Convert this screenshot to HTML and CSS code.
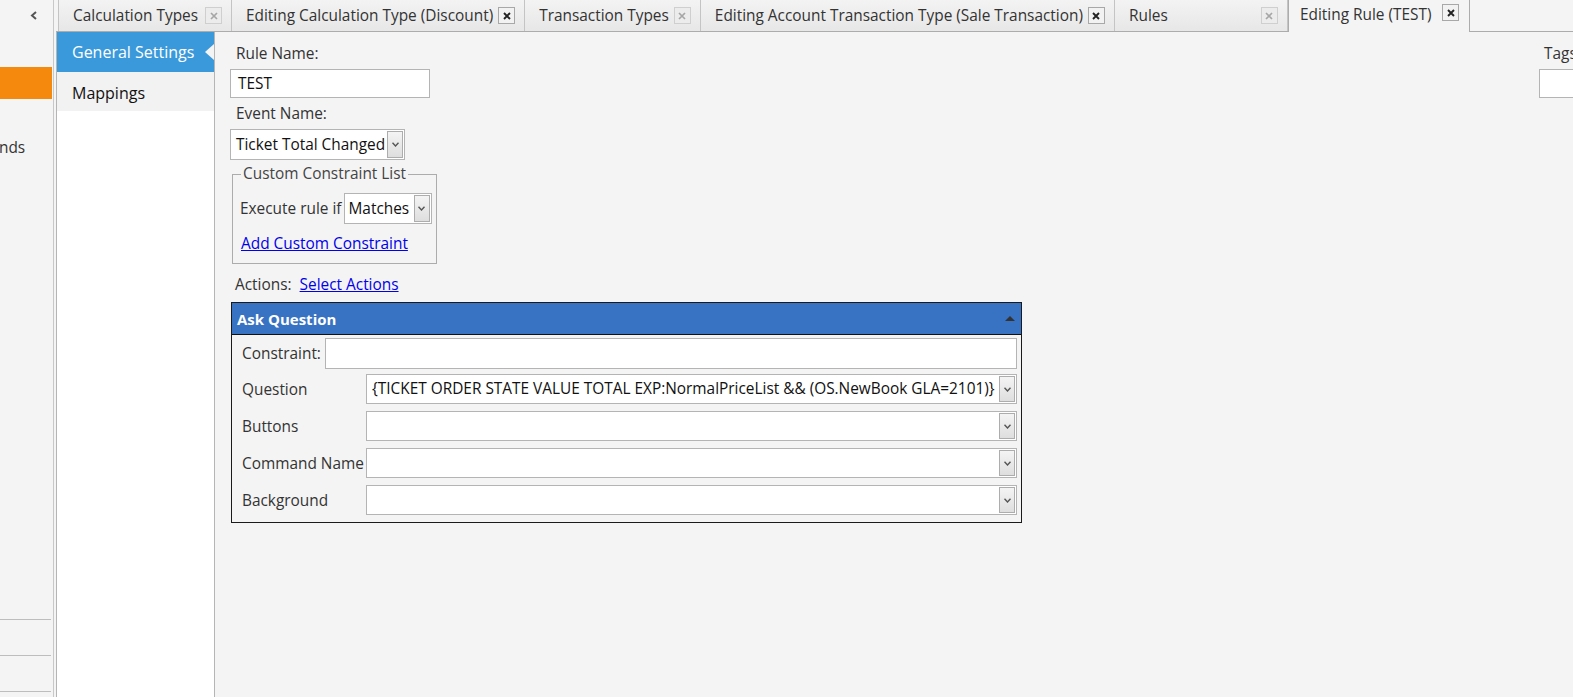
FILE: index.html
```html
<!DOCTYPE html>
<html lang="en">
<head>
    <meta charset="UTF-8">
    <title>Editing Rule (TEST)</title>
    <link rel="stylesheet" href="styles.css">
</head>
<body>
    <div class="app">
        <aside class="sidebar">
            <div class="collapse">
                <svg width="8" height="9" viewBox="0 0 8 9"><path d="M6 1 L2 4.5 L6 8" fill="none" stroke="#555" stroke-width="2"/></svg>
            </div>
            <div class="side-active"></div>
            <div class="side-item"><span>Commands</span></div>
            <div class="side-bottom">
                <div class="side-line"></div>
                <div class="side-line"></div>
                <div class="side-line"></div>
            </div>
        </aside>

        <main class="main">
            <div class="tabbar">
                <div class="tab">
                    <span>Calculation Types</span>
                    <span class="close faded"><svg width="8" height="8" viewBox="0 0 8 8"><path d="M1 1 L7 7 M7 1 L1 7" stroke="currentColor" stroke-width="1.7"/></svg></span>
                </div>
                <div class="tab">
                    <span>Editing Calculation Type (Discount)</span>
                    <span class="close"><svg width="8" height="8" viewBox="0 0 8 8"><path d="M1 1 L7 7 M7 1 L1 7" stroke="currentColor" stroke-width="1.9"/></svg></span>
                </div>
                <div class="tab">
                    <span>Transaction Types</span>
                    <span class="close faded"><svg width="8" height="8" viewBox="0 0 8 8"><path d="M1 1 L7 7 M7 1 L1 7" stroke="currentColor" stroke-width="1.7"/></svg></span>
                </div>
                <div class="tab">
                    <span>Editing Account Transaction Type (Sale Transaction)</span>
                    <span class="close"><svg width="8" height="8" viewBox="0 0 8 8"><path d="M1 1 L7 7 M7 1 L1 7" stroke="currentColor" stroke-width="1.9"/></svg></span>
                </div>
                <div class="tab">
                    <span>Rules</span>
                    <span class="close faded"><svg width="8" height="8" viewBox="0 0 8 8"><path d="M1 1 L7 7 M7 1 L1 7" stroke="currentColor" stroke-width="1.7"/></svg></span>
                </div>
                <div class="tab active">
                    <span>Editing Rule (TEST)</span>
                    <span class="close"><svg width="8" height="8" viewBox="0 0 8 8"><path d="M1 1 L7 7 M7 1 L1 7" stroke="currentColor" stroke-width="1.9"/></svg></span>
                </div>
            </div>

            <div class="workspace">
                <nav class="subnav">
                    <div class="subnav-item selected">General Settings</div>
                    <div class="subnav-item">Mappings</div>
                </nav>

                <section class="content">
                    <div class="form-col">
                        <label class="field-label">Rule Name:</label>
                        <div class="textbox name-box">TEST</div>

                        <label class="field-label event-label">Event Name:</label>
                        <div class="combo event-combo">
                            <span class="combo-text">Ticket Total Changed</span>
                            <span class="drop"><svg width="7" height="5" viewBox="0 0 7 5"><path d="M0.5 0.8 L3.5 4 L6.5 0.8" fill="none" stroke="#555" stroke-width="1.4"/></svg></span>
                        </div>

                        <fieldset class="constraints">
                            <legend>Custom Constraint List</legend>
                            <div class="exec-row">
                                <span>Execute rule if</span>
                                <div class="combo match-combo">
                                    <span class="combo-text">Matches</span>
                                    <span class="drop"><svg width="7" height="5" viewBox="0 0 7 5"><path d="M0.5 0.8 L3.5 4 L6.5 0.8" fill="none" stroke="#555" stroke-width="1.4"/></svg></span>
                                </div>
                            </div>
                            <a href="#" class="link add-link">Add Custom Constraint</a>
                        </fieldset>

                        <div class="actions-row">
                            <span>Actions:</span>
                            <a href="#" class="link">Select Actions</a>
                        </div>

                        <div class="action-panel">
                            <div class="panel-head">
                                <span>Ask Question</span>
                                <span class="collapse-arrow"></span>
                            </div>
                            <div class="panel-body">
                                <div class="prow constraint-row">
                                    <span class="plabel-auto">Constraint:</span>
                                    <div class="textbox wide"></div>
                                </div>
                                <div class="prow">
                                    <span class="plabel">Question</span>
                                    <div class="combo wide">
                                        <span class="combo-text">{TICKET ORDER STATE VALUE TOTAL EXP:NormalPriceList &amp;&amp; (OS.NewBook GLA=2101)}</span>
                                        <span class="drop"><svg width="7" height="5" viewBox="0 0 7 5"><path d="M0.5 0.8 L3.5 4 L6.5 0.8" fill="none" stroke="#555" stroke-width="1.4"/></svg></span>
                                    </div>
                                </div>
                                <div class="prow">
                                    <span class="plabel">Buttons</span>
                                    <div class="combo wide">
                                        <span class="combo-text"></span>
                                        <span class="drop"><svg width="7" height="5" viewBox="0 0 7 5"><path d="M0.5 0.8 L3.5 4 L6.5 0.8" fill="none" stroke="#555" stroke-width="1.4"/></svg></span>
                                    </div>
                                </div>
                                <div class="prow">
                                    <span class="plabel">Command Name</span>
                                    <div class="combo wide">
                                        <span class="combo-text"></span>
                                        <span class="drop"><svg width="7" height="5" viewBox="0 0 7 5"><path d="M0.5 0.8 L3.5 4 L6.5 0.8" fill="none" stroke="#555" stroke-width="1.4"/></svg></span>
                                    </div>
                                </div>
                                <div class="prow">
                                    <span class="plabel">Background</span>
                                    <div class="combo wide">
                                        <span class="combo-text"></span>
                                        <span class="drop"><svg width="7" height="5" viewBox="0 0 7 5"><path d="M0.5 0.8 L3.5 4 L6.5 0.8" fill="none" stroke="#555" stroke-width="1.4"/></svg></span>
                                    </div>
                                </div>
                            </div>
                        </div>
                    </div>

                    <div class="tags-col">
                        <label class="field-label">Tags:</label>
                        <div class="textbox tags-box"></div>
                    </div>
                </section>
            </div>
        </main>
    </div>
</body>
</html>
```

FILE: styles.css
```css
body {
    margin: 0;
    font-family: 'Open Sans', 'Noto Sans', sans-serif;
    font-size: 15.4px;
    color: #333;
    background-color: #f4f4f4;
    overflow: hidden;
}
.app {
    display: flex;
    height: 697px;
    overflow: hidden;
}

/* left app sidebar */
.sidebar {
    width: 53px;
    flex-shrink: 0;
    border-right: 1px solid #c8c8c8;
    background-color: #f4f4f4;
    display: flex;
    flex-direction: column;
}
.sidebar > div {
    flex-shrink: 0;
}
.collapse {
    height: 31px;
    display: flex;
    align-items: center;
    justify-content: flex-end;
    padding-right: 15px;
}
.side-active {
    height: 32px;
    margin-top: 36px;
    margin-right: 1px;
    background-color: #f5890d;
}
.side-item {
    margin-top: 38px;
    height: 22px;
    line-height: 22px;
    overflow: hidden;
    white-space: nowrap;
}
.side-item span {
    display: inline-block;
    margin-left: -57px;
}
.side-bottom {
    margin-top: 460px;
}
.side-line {
    height: 35px;
    border-top: 1px solid #bdbdbd;
    margin-right: 2px;
}

/* main area */
.main {
    flex: 1;
    min-width: 0;
    display: flex;
    flex-direction: column;
    padding-left: 2px;
}
.tabbar {
    display: flex;
    height: 31px;
    border-bottom: 1px solid #acacac;
    padding-left: 2px;
    flex-shrink: 0;
}
.tab {
    display: flex;
    align-items: center;
    gap: 5px;
    min-width: 149px;
    height: 31px;
    padding: 0 9px 0 14px;
    background: linear-gradient(#f3f3f3, #e7e7e7);
    border-right: 1px solid #c4c4c4;
    white-space: nowrap;
    font-size: 15.4px;
    color: #333;
    flex-shrink: 0;
}
.tab:first-child {
    border-left: 1px solid #c4c4c4;
}
.tab .close {
    margin-left: auto;
}
.close {
    width: 15px;
    height: 15px;
    display: flex;
    align-items: center;
    justify-content: center;
    border: 1px solid #a8a8a8;
    background-color: #f2f2f2;
    color: #222;
    flex-shrink: 0;
}
.close.faded {
    border-color: #cfcfcf;
    color: #a6a6a6;
    background-color: #ececec;
}
.tab.active {
    min-width: 0;
    height: 32px;
    margin-bottom: -1px;
    padding: 0 10px 0 11px;
    background: #f4f4f4;
    border-left: 1px solid #acacac;
    border-right: 1px solid #acacac;
    align-items: flex-start;
}
.tab.active span:first-child {
    margin-top: 4px;
}
.tab.active .close {
    margin-top: 4px;
    margin-left: 6px;
}

.workspace {
    flex: 1;
    display: flex;
    min-height: 0;
}

/* section navigation */
.subnav {
    width: 157px;
    flex-shrink: 0;
    background-color: #fff;
    border-left: 1px solid #b5b5b5;
    border-right: 1px solid #b5b5b5;
}
.subnav-item {
    height: 39px;
    line-height: 42px;
    padding-left: 15px;
    font-size: 16px;
    color: #111;
    background-color: #f2f2f2;
}
.subnav-item.selected {
    height: 40px;
    line-height: 40px;
    color: #fff;
    background-color: #3a99db;
    position: relative;
}
.subnav-item.selected::after {
    content: "";
    position: absolute;
    right: 0;
    top: 12px;
    border-style: solid;
    border-width: 8px 9px 8px 0;
    border-color: transparent #f4f4f4 transparent transparent;
}

/* form content */
.content {
    flex: 1;
    min-width: 0;
    display: flex;
    overflow: hidden;
    padding-left: 15px;
    background-color: #f4f4f4;
}
.form-col {
    width: 1309px;
    flex-shrink: 0;
    padding-top: 12px;
}
.tags-col {
    padding-top: 12px;
    flex-shrink: 0;
}
.field-label {
    display: block;
    height: 20px;
    line-height: 20px;
    margin: 0 0 5px 6px;
}
.tags-col .field-label {
    margin-left: 5px;
}
.event-label {
    margin-top: 6px;
}
.textbox {
    height: 27px;
    line-height: 27px;
    border: 1px solid #b4b4b4;
    background-color: #fff;
    color: #111;
    padding-left: 7px;
    box-sizing: content-box;
}
.name-box {
    width: 191px;
}
.tags-box {
    width: 200px;
}
.combo {
    display: flex;
    align-items: stretch;
    height: 27px;
    border: 1px solid #b4b4b4;
    background-color: #fff;
    padding: 1px;
    box-sizing: content-box;
}
.combo-text {
    flex: 1;
    padding-left: 4px;
    line-height: 27px;
    color: #111;
    white-space: nowrap;
    overflow: hidden;
}
.drop {
    width: 14px;
    display: flex;
    align-items: center;
    justify-content: center;
    border: 1px solid #adadad;
    background: linear-gradient(#f4f4f4, #dedede);
}
.event-combo {
    width: 171px;
}
.match-combo {
    width: 84px;
}
.match-combo .combo-text {
    padding-left: 3px;
}

.constraints {
    width: fit-content;
    margin: 4px 0 0 2px;
    padding: 9px 4px 9px 7px;
    border: 1px solid #acacac;
    min-width: 0;
}
.constraints legend {
    margin-left: 1px;
    padding: 0 2px;
    line-height: 20px;
    color: #444;
}
.exec-row {
    display: flex;
    align-items: center;
    gap: 2px;
}
.link {
    color: #0000ee;
    text-decoration: underline;
}
.add-link {
    display: inline-block;
    margin: 10px 0 0 1px;
    line-height: 20px;
}
.actions-row {
    display: flex;
    gap: 8px;
    margin: 11px 0 0 5px;
    line-height: 20px;
}

/* action panel */
.action-panel {
    width: 789px;
    margin: 7px 0 0 1px;
    border: 1px solid #1a1a1a;
}
.panel-head {
    display: flex;
    align-items: center;
    justify-content: space-between;
    height: 31px;
    padding: 0 6px 0 5px;
    background-color: #3872c2;
    border-bottom: 1px solid #111;
    color: #fff;
    font-weight: bold;
    font-size: 15px;
}
.collapse-arrow {
    width: 0;
    height: 0;
    border-style: solid;
    border-width: 0 5px 5px 5px;
    border-color: transparent transparent #333 transparent;
}
.panel-body {
    padding: 3px 4px 7px 10px;
    display: flex;
    flex-direction: column;
    gap: 7px;
}
.prow {
    display: flex;
    align-items: center;
}
.constraint-row {
    margin-bottom: -2px;
}
.plabel-auto {
    margin-right: 4px;
}
.plabel {
    width: 124px;
    flex-shrink: 0;
}
.wide {
    flex: 1;
}
.constraint-row .textbox {
    height: 29px;
}
.prow .combo {
    height: 26px;
}
.prow .combo-text {
    line-height: 26px;
}
```
